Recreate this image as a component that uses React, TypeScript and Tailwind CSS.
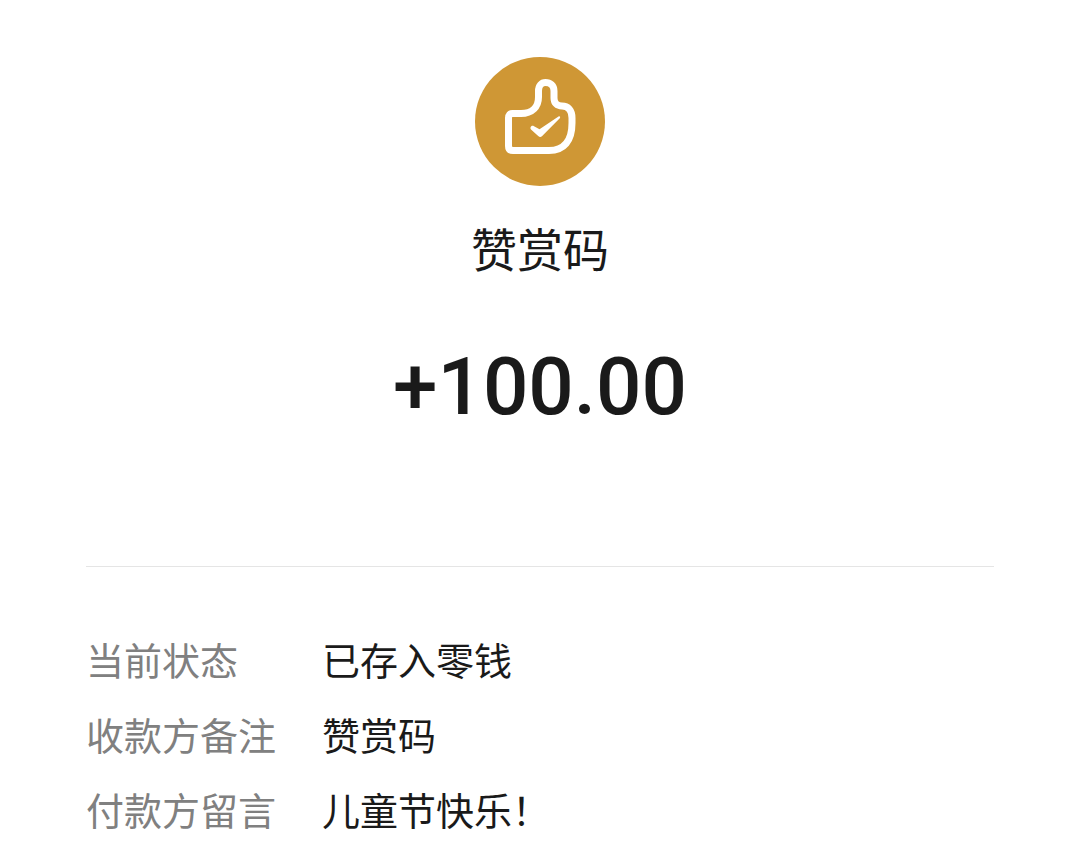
const details = [
  { label: "当前状态", value: "已存入零钱" },
  { label: "收款方备注", value: "赞赏码" },
  { label: "付款方留言", value: "儿童节快乐！" },
]

function RewardIcon() {
  return (
    <svg viewBox="0 0 130 130" className="size-[130px]" fill="none" aria-hidden="true">
      <ellipse cx="65" cy="64.5" rx="65" ry="64.5" fill="#cf9735" />
      <path
        d="M37.500 56.500H46C57 56.500 63.500 50 63.500 40V34C63.500 28.500 66.500 25.500 70.500 25.500C75 25.500 79 28.500 79 34V41C79 46 82 49 87 49C93 49 97 53 97 61V66C97 84 89 93.500 74 93.500H38C35 93.500 33.500 92 33.500 89V61C33.500 58 35 56.500 37.500 56.500Z"
        stroke="#fff"
        strokeWidth="7"
        strokeLinejoin="round"
      />
      <path
        d="M55.500 70.500C56 68.800 57.500 68.300 59 69.200L64.500 72.200L83.500 59.500C84.800 58.800 85.700 60 84.800 61.200L67.200 79C65.800 80.300 64.600 80.300 63.200 79L56 72.500C55.400 71.900 55.300 71.200 55.500 70.500Z"
        fill="#fff"
      />
    </svg>
  )
}

export default function App() {
  return (
    <main className="min-h-screen bg-white px-[86px] pt-[57px] text-[#1a1a1a] font-['Noto_Sans_CJK_SC',sans-serif]">
      <header className="flex flex-col items-center border-b border-[#e5e5e5] pb-[131px]">
        <RewardIcon />
        <h1 className="mt-7 text-[46px] leading-[64px]">赞赏码</h1>
        <p className="mt-[60px] text-[80px] leading-[96px] font-medium font-[Roboto,sans-serif]">+100.00</p>
      </header>
      <dl className="flex flex-col gap-[21px] pt-[65px] text-[38px] leading-[54px]">
        {details.map((item) => (
          <div key={item.label} className="flex">
            <dt className="w-[236px] shrink-0 text-[#808080]">{item.label}</dt>
            <dd>{item.value}</dd>
          </div>
        ))}
      </dl>
    </main>
  )
}
